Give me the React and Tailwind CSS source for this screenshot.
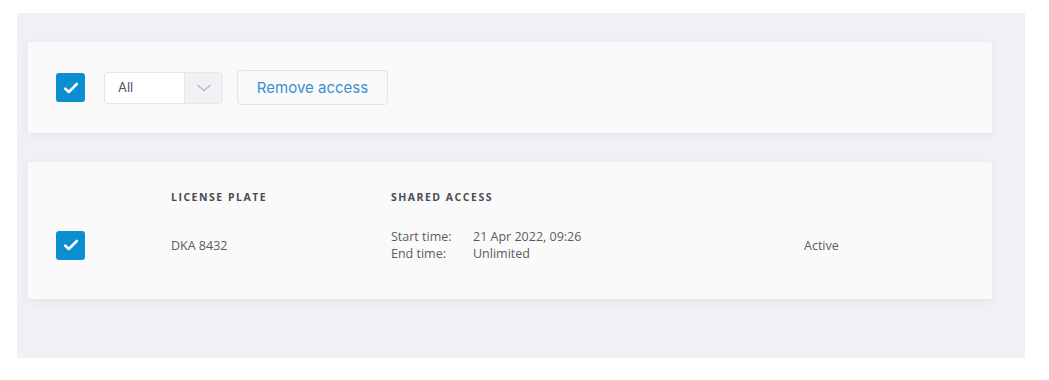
const Checkbox = () => (
  <div className="flex h-[29px] w-[29px] items-center justify-center rounded-[3px] bg-[#0b8fd1]">
    <svg width="18" height="18" viewBox="0 0 18 18" fill="none">
      <path d="M3.2 9.6l3.6 3.4L14.8 5" stroke="#fff" strokeWidth="2.6" strokeLinecap="round" strokeLinejoin="round" />
    </svg>
  </div>
);

export default function App() {
  return (
    <div className="h-[380px] w-[1049px] bg-white pt-[13px] pl-[17px]">
      <div className="h-[345px] w-[1008px] bg-[#f0f1f5] pl-[11px] pr-[33px] pt-[29px]">
        <div className="flex h-[91px] items-center rounded-[3px] bg-[#fafafa] pl-[28px] shadow-[0_2px_10px_rgba(0,0,0,0.06)]">
          <Checkbox />
          <div className="ml-[19px] flex h-[32px] w-[119px] overflow-hidden rounded-[3px] border border-[#e6e7ec] bg-white">
            <div className="flex flex-1 items-center pl-[13px] pt-[1px] font-['Inter',sans-serif] text-[13px] text-[#55555f]">All</div>
            <div className="flex w-[38px] items-center justify-center border-l border-[#e6e7ec] bg-[#f0f1f5]">
              <svg width="16" height="10" viewBox="0 0 16 10" fill="none">
                <path d="M2 2.5l6 5 6-5" stroke="#b8bac8" strokeWidth="1.6" strokeLinecap="round" strokeLinejoin="round" />
              </svg>
            </div>
          </div>
          <button className="ml-[14px] h-[35px] w-[151px] rounded-[4px] border border-[#e3e4e9] bg-[#fafafa] pt-[1px] font-['Inter',sans-serif] text-[15px] text-[#3b8fd4]">
            Remove access
          </button>
        </div>

        <div className="mt-[29px] h-[137px] rounded-[3px] bg-[#fafafa] pt-[27px] pl-[28px] font-['Open_Sans',sans-serif] shadow-[0_2px_10px_rgba(0,0,0,0.06)]">
          <div className="grid grid-cols-[115px_220px_413px_1fr] text-[10.5px] font-bold leading-[16px] tracking-[1.5px] text-[#4a4a55]">
            <div />
            <div>LICENSE PLATE</div>
            <div>SHARED ACCESS</div>
            <div />
          </div>
          <div className="mt-[23px] grid grid-cols-[115px_220px_413px_1fr] items-center text-[12.5px] leading-[17px] text-[#5a5a66]">
            <div><Checkbox /></div>
            <div>DKA 8432</div>
            <div className="grid grid-cols-[82px_1fr]">
              <span>Start time:</span>
              <span>21 Apr 2022, 09:26</span>
              <span>End time:</span>
              <span>Unlimited</span>
            </div>
            <div>Active</div>
          </div>
        </div>
      </div>
    </div>
  );
}
